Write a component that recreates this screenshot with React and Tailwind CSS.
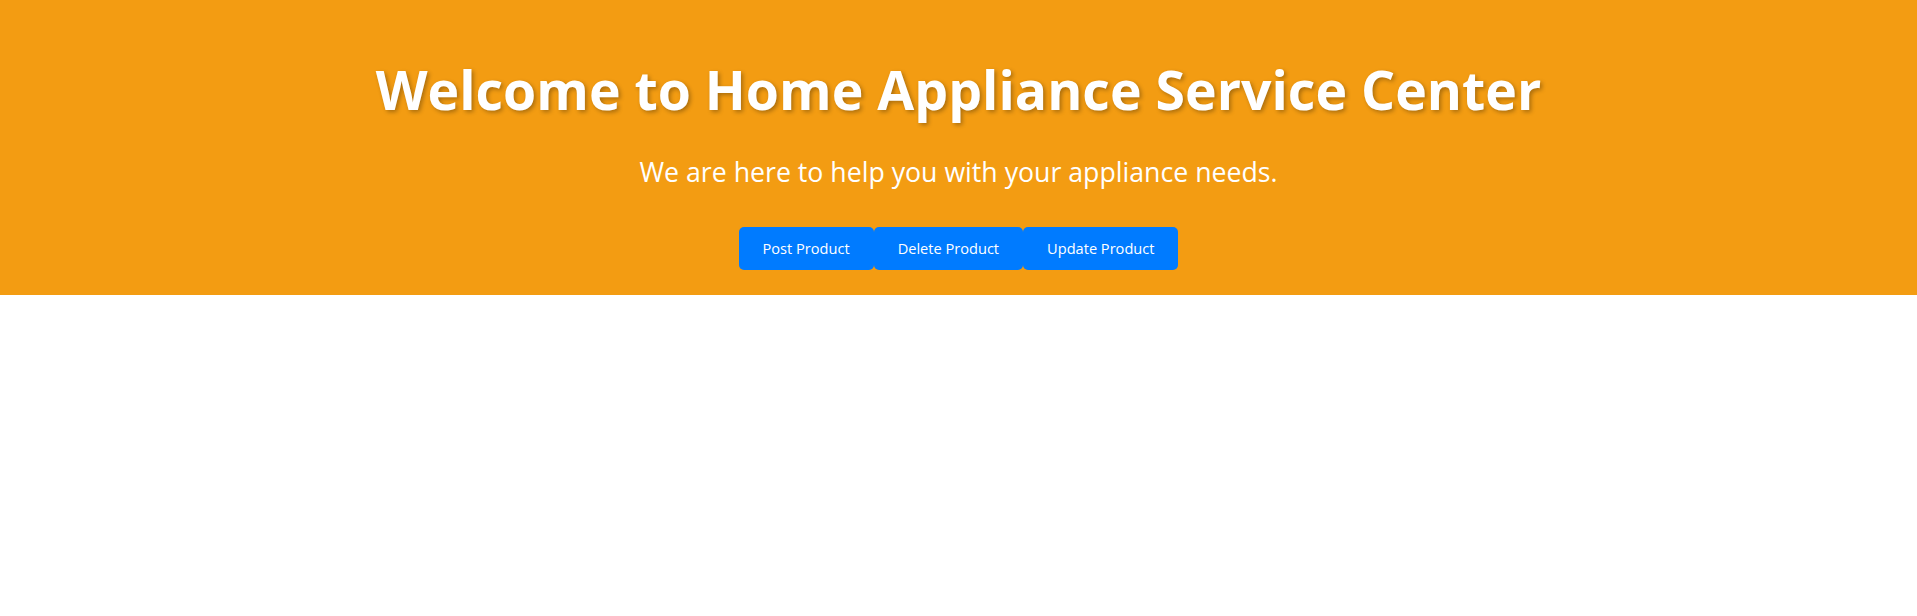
import React from 'react';

const App = () => {
  const buttons = ['Post Product', 'Delete Product', 'Update Product'];

  return (
    <div className="min-h-screen bg-white" style={{ fontFamily: '"Open Sans", "Noto Sans", sans-serif' }}>
      {/* Hero */}
      <header className="bg-[#f39c12] text-white text-center pt-[63px] pb-[25px]">
        <h1 className="text-[53.6px] leading-[54px] font-bold [text-shadow:2px_2px_4px_rgba(0,0,0,0.3)]">
          Welcome to Home Appliance Service Center
        </h1>
        <p className="mt-[41px] text-[26.7px] leading-[27px]">
          We are here to help you with your appliance needs.
        </p>
        <div className="mt-[42px] flex justify-center">
          {buttons.map((label) => (
            <button
              key={label}
              className="h-[43px] px-[24px] bg-[#007bff] text-white text-[14.6px] rounded-[5px]"
            >
              {label}
            </button>
          ))}
        </div>
      </header>
    </div>
  );
};

export default App;
